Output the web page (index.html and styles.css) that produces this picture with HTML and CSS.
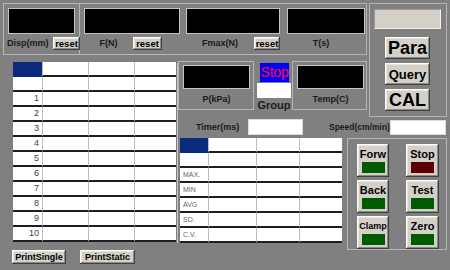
FILE: index.html
```html
<!DOCTYPE html>
<html>
<head>
<meta charset="utf-8">
<link rel="stylesheet" href="styles.css">
</head>
<body>
<div class="app">
  <div class="top-group">
    <div class="cell c1">
      <div class="lcd w67"></div>
      <div class="lrow"><span class="lbl">Disp(mm)</span><button class="btn reset r27">reset</button></div>
    </div>
    <div class="cell c2">
      <div class="lcd w96"></div>
      <div class="lrow"><span class="lbl">F(N)</span><button class="btn reset r29">reset</button></div>
    </div>
    <div class="cell c3">
      <div class="lcd w94"></div>
      <div class="lrow"><span class="lbl">Fmax(N)</span><button class="btn reset r26">reset</button></div>
    </div>
    <div class="cell c4">
      <div class="lcd w78"></div>
      <div class="lrow"><span class="lbl">T(s)</span></div>
    </div>
  </div>

  <div class="right-panel">
    <div class="blank-box"></div>
    <button class="btn side big">Para</button>
    <button class="btn side mid">Query</button>
    <button class="btn side big">CAL</button>
  </div>

  <div class="left-col">
    <div class="table-wrap">
      <div class="tbl t1">
        <div class="row"><div class="c sel"></div><div class="c"></div><div class="c"></div><div class="c"></div></div>
        <div class="row"><div class="c"></div><div class="c"></div><div class="c"></div><div class="c"></div></div>
        <div class="row"><div class="c num">1</div><div class="c"></div><div class="c"></div><div class="c"></div></div>
        <div class="row"><div class="c num">2</div><div class="c"></div><div class="c"></div><div class="c"></div></div>
        <div class="row"><div class="c num">3</div><div class="c"></div><div class="c"></div><div class="c"></div></div>
        <div class="row"><div class="c num">4</div><div class="c"></div><div class="c"></div><div class="c"></div></div>
        <div class="row"><div class="c num">5</div><div class="c"></div><div class="c"></div><div class="c"></div></div>
        <div class="row"><div class="c num">6</div><div class="c"></div><div class="c"></div><div class="c"></div></div>
        <div class="row"><div class="c num">7</div><div class="c"></div><div class="c"></div><div class="c"></div></div>
        <div class="row"><div class="c num">8</div><div class="c"></div><div class="c"></div><div class="c"></div></div>
        <div class="row"><div class="c num">9</div><div class="c"></div><div class="c"></div><div class="c"></div></div>
        <div class="row"><div class="c num">10</div><div class="c"></div><div class="c"></div><div class="c"></div></div>
      </div>
      <div class="scroll"></div>
    </div>
    <div class="print-row">
      <button class="btn print p54">PrintSingle</button>
      <button class="btn print p55">PrintStatic</button>
    </div>
  </div>

  <div class="mid-top">
    <div class="gbox">
      <div class="lcd w67 h24"></div>
      <div class="glbl">P(kPa)</div>
    </div>
    <div class="stop-stack">
      <div class="stop-box">Stop</div>
      <div class="white-box"></div>
      <div class="group-lbl">Group</div>
    </div>
    <div class="gbox gbox-t">
      <div class="lcd w67 h24"></div>
      <div class="glbl">Temp(C)</div>
    </div>
  </div>

  <div class="timer-row">
    <span class="lbl timer-lbl">Timer(ms)</span>
    <div class="field f-timer"></div>
    <span class="lbl speed-lbl">Speed(cm/min)</span>
    <div class="field f-speed"></div>
  </div>

  <div class="bottom-row">
    <div class="tbl t2">
      <div class="row"><div class="c sel"></div><div class="c"></div><div class="c"></div><div class="c"></div></div>
      <div class="row"><div class="c"></div><div class="c"></div><div class="c"></div><div class="c"></div></div>
      <div class="row"><div class="c stat">MAX.</div><div class="c"></div><div class="c"></div><div class="c"></div></div>
      <div class="row"><div class="c stat">MIN</div><div class="c"></div><div class="c"></div><div class="c"></div></div>
      <div class="row"><div class="c stat">AVG</div><div class="c"></div><div class="c"></div><div class="c"></div></div>
      <div class="row"><div class="c stat">SD.</div><div class="c"></div><div class="c"></div><div class="c"></div></div>
      <div class="row"><div class="c stat">C.V.</div><div class="c"></div><div class="c"></div><div class="c"></div></div>
    </div>
    <div class="controls">
      <button class="btn ctl b32"><span>Forw</span><i class="led green"></i></button>
      <button class="btn ctl b33"><span>Stop</span><i class="led red"></i></button>
      <button class="btn ctl b32"><span>Back</span><i class="led green"></i></button>
      <button class="btn ctl b33"><span>Test</span><i class="led green"></i></button>
      <button class="btn ctl b32"><span class="small">Clamp</span><i class="led green"></i></button>
      <button class="btn ctl b33"><span>Zero</span><i class="led green"></i></button>
    </div>
  </div>
</div>
</body>
</html>
```

FILE: styles.css
```css
* { box-sizing: border-box; }

html, body {
  margin: 0;
  padding: 0;
}

body {
  width: 450px;
  height: 270px;
  overflow: hidden;
  background: #808080;
  font-family: "Liberation Sans", Arial, sans-serif;
  color: #1a1a1a;
}

.app {
  display: grid;
  grid-template-columns: 175px 191px 78px;
  grid-template-rows: 55px 59px 20px 113px 20px;
  padding: 3px 0 0 3px;
}

/* generic 3D button */
.btn {
  margin: 0;
  padding: 0;
  border: none;
  background: #d4d0c8;
  box-shadow: inset -1px -1px #404040, inset 1px 1px #ffffff, inset -2px -2px #8a8a8a, inset 2px 2px #e6e4de;
  font-family: inherit;
  font-weight: bold;
  color: #000;
  display: flex;
  align-items: center;
  justify-content: center;
}

.lbl {
  font-size: 9px;
  font-weight: bold;
  line-height: 13px;
  white-space: nowrap;
}

/* top group */
.top-group {
  grid-column: 1 / 3;
  grid-row: 1;
  width: 364px;
  height: 52px;
  border: 1px solid #b6b6b6;
  display: flex;
}

.cell {
  padding-top: 4px;
  height: 100%;
}
.c1 { width: 76px; padding-left: 4px; border-right: 1px solid #b6b6b6; }
.c2 { width: 103px; padding-left: 4px; }
.c3 { width: 101px; padding-left: 3px; }
.c4 { width: 82px; padding-left: 3px; }

.lcd {
  background: #000;
  border: 1px solid #c4c4c4;
  height: 26px;
}
.h24 { height: 24px; }
.w67 { width: 67px; }
.w96 { width: 96px; }
.w94 { width: 94px; }
.w78 { width: 78px; }

.lrow {
  display: flex;
  align-items: center;
  height: 13px;
  margin-top: 3px;
}
.c1 .lrow { padding-left: -1px; margin-left: -1px; width: 73px; justify-content: space-between; }
.c2 .lrow { width: 78px; }
.c2 .lbl, .c3 .lbl, .c4 .lbl { flex: 1; text-align: center; }
.c3 .lrow { width: 94px; }
.c4 .lrow { width: 68px; }

.reset {
  height: 13px;
  font-size: 9.5px;
}
.r27 { width: 27px; }
.r29 { width: 29px; }
.r26 { width: 26px; }

/* right panel */
.right-panel {
  grid-column: 3;
  grid-row: 1 / 3;
  width: 78px;
  height: 114px;
  border: 1px solid #b6b6b6;
  display: flex;
  flex-direction: column;
  align-items: flex-start;
  padding: 5px 0 0 4px;
}
.blank-box {
  width: 67px;
  height: 20px;
  background: #d4d0c8;
  border: 1px solid;
  border-color: #9a9a9a #f0f0f0 #f0f0f0 #9a9a9a;
}
.side {
  width: 45px;
  height: 22px;
  margin-left: 11px;
  margin-top: 4px;
}
.side:nth-of-type(1) { margin-top: 8px; }
.big { font-size: 18px; }
.mid { font-size: 13px; }

/* left column */
.left-col {
  grid-column: 1;
  grid-row: 2 / 6;
  padding: 4px 0 0 10px;
}
.table-wrap {
  display: flex;
  align-items: flex-start;
}
.scroll {
  width: 1px;
  height: 180px;
  margin-left: 1px;
  margin-top: 1px;
  background: #c4c4c4;
}

.tbl {
  background: #fff;
}
.row {
  display: grid;
  height: 15px;
}
.t1 .row { grid-template-columns: 29px 46px 46px 42px; }
.t2 .row { grid-template-columns: 28px 48px 43px 43px; }

.c {
  height: 15px;
  border-bottom: 2px solid #1e1e1e;
  border-left: 1px solid #bdbdbd;
  line-height: 13px;
  white-space: nowrap;
  overflow: hidden;
}
.c:first-child { border-left: none; }
.c.sel {
  background: #0c2a7c;
  border-bottom-color: #0c2a7c;
}
.num {
  text-align: right;
  padding-right: 3px;
  font-size: 9px;
  color: #3c3c58;
}
.stat {
  padding-left: 3px;
  font-size: 7px;
  color: #6e5a7e;
}

.print-row {
  display: flex;
  gap: 14px;
  margin-top: 7px;
  margin-left: -1px;
}
.print {
  height: 14px;
  font-size: 9px;
}
.p54 { width: 54px; }
.p55 { width: 55px; }

/* middle top */
.mid-top {
  grid-column: 2;
  grid-row: 2;
  display: flex;
  align-items: flex-start;
  padding-top: 3px;
}
.gbox {
  width: 76px;
  height: 49px;
  border: 1px solid #b6b6b6;
  padding: 3px 0 0 4px;
}
.gbox-t { width: 75px; margin-left: 1px; }
.glbl {
  width: 67px;
  text-align: center;
  font-size: 9px;
  font-weight: bold;
  line-height: 20px;
}

.stop-stack {
  width: 34px;
  margin-left: 3px;
}
.stop-box {
  width: 29px;
  height: 19px;
  margin: 2px 0 0 3px;
  background: #0000ff;
  color: #ff1010;
  font-size: 14px;
  line-height: 19px;
  text-align: center;
  letter-spacing: -0.2px;
}
.white-box {
  width: 34px;
  height: 15px;
  margin-top: 1px;
  background: #fff;
}
.group-lbl {
  font-size: 11px;
  font-weight: bold;
  line-height: 12px;
  margin-top: 1px;
  text-align: center;
}

/* timer row */
.timer-row {
  grid-column: 2 / 4;
  grid-row: 3;
  display: flex;
  align-items: center;
  padding-left: 18px;
}
.field {
  background: #fff;
  border: 1px solid #dcdcdc;
}
.timer-lbl { width: 43px; }
.f-timer { width: 55px; height: 16px; margin-left: 9px; }
.speed-lbl { font-size: 8.5px; width: 60px; margin-left: 26px; }
.f-speed { width: 56px; height: 15px; margin-left: 1px; }

/* bottom row */
.bottom-row {
  grid-column: 2 / 4;
  grid-row: 4;
  display: flex;
  align-items: flex-start;
  padding: 1px 0 0 2px;
}
.controls {
  width: 100px;
  height: 112px;
  margin-left: 5px;
  border: 1px solid #b6b6b6;
  display: grid;
  grid-template-columns: 32px 33px;
  grid-auto-rows: 33px;
  column-gap: 17px;
  row-gap: 3px;
  padding: 5px 0 0 9px;
}
.ctl {
  flex-direction: column;
  justify-content: flex-start;
  padding-top: 4px;
  font-size: 11px;
  height: 33px;
}
.ctl span {
  line-height: 13px;
  height: 13px;
}
.ctl span.small { font-size: 9px; }
.led {
  display: block;
  width: 23px;
  height: 11px;
  margin-top: 1px;
}
.green { background: #005a00; }
.red { background: #5a0000; }
```
